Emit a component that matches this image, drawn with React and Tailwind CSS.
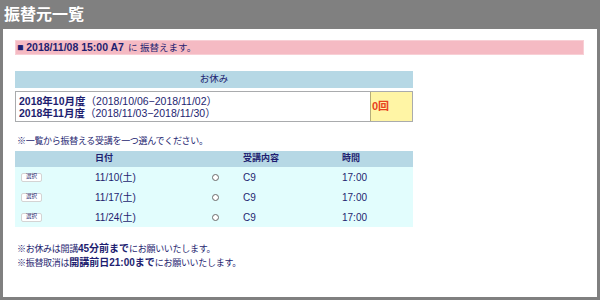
import React from 'react';

const font = { fontFamily: '"Liberation Sans", "Noto Sans CJK JP", sans-serif' };

const rows = [
  { date: '11/10(土)', course: 'C9', time: '17:00' },
  { date: '11/17(土)', course: 'C9', time: '17:00' },
  { date: '11/24(土)', course: 'C9', time: '17:00' },
];

const App = () => {
  return (
    <div className="w-[600px] h-[300px] bg-[#808080] flex flex-col" style={font}>
      {/* header */}
      <div className="h-[29px] flex items-center pl-[4px]">
        <h1 className="text-[16px] font-bold text-white leading-none">振替元一覧</h1>
      </div>

      <div className="flex-1 bg-white mx-[3px] mb-[3px] pl-[12px] pr-[13px] pt-[11px] text-[#1e1e70]">
        {/* target */}
        <div className="h-[15px] bg-[#f5bac3] border border-[#f8cfd5] flex items-center pl-[1px] text-[10.5px] leading-none">
          <span className="font-bold">■ 2018/11/08 15:00 A7</span>
          <span className="ml-[4px] text-[9.5px]">に 振替えます。</span>
        </div>

        {/* absence */}
        <div className="w-[398px] mt-[16px]">
          <div className="h-[17px] bg-[#b6d8e5] flex items-center justify-center text-[9.5px]">お休み</div>
          <div className="mt-[3px] h-[31px] flex border border-[#a9abad]">
            <div className="flex-1 flex flex-col justify-center pl-[3px] text-[10.5px] leading-[12px]">
              <div><span className="font-bold">2018年10月度</span>（2018/10/06−2018/11/02）</div>
              <div><span className="font-bold">2018年11月度</span>（2018/11/03−2018/11/30）</div>
            </div>
            <div className="w-[42px] bg-[#fff5a5] border-l border-[#b5ad7a] flex items-center pl-[1px] text-[11px] font-bold text-[#e8421e]">
              0回
            </div>
          </div>
        </div>

        <p className="mt-[13px] text-[9px] tracking-[-0.3px] leading-[12px] pl-[2px]">※一覧から振替える受講を一つ選んでください。</p>

        {/* list */}
        <div className="w-[398px] mt-[4px] text-[10px]">
          <div className="h-[16px] bg-[#b6d8e5] grid grid-cols-[80px_148px_99px_1fr] items-center font-bold text-[9px]">
            <div />
            <div>日付</div>
            <div>受講内容</div>
            <div>時間</div>
          </div>
          <div className="bg-[#e2fdfd] h-[60px]">
            {rows.map((r) => (
              <div key={r.date} className="h-[20px] grid grid-cols-[80px_117px_31px_99px_1fr] items-center">
                <div className="pl-[6px]">
                  <button className="w-[21px] h-[9px] bg-white border border-[#d4d4d4] rounded-[2px] text-[5.5px] leading-none flex items-center justify-center text-[#1e1e70]">
                    選択
                  </button>
                </div>
                <div>{r.date}</div>
                <div>
                  <div className="w-[7px] h-[7px] rounded-full border border-[#6a6a6a] bg-white" />
                </div>
                <div>{r.course}</div>
                <div>{r.time}</div>
              </div>
            ))}
          </div>
        </div>

        <div className="mt-[15px] text-[9px] tracking-[-0.3px] leading-[14px] pl-[2px]">
          <p>※お休みは開講<span className="font-bold text-[10px] tracking-normal">45分前まで</span>にお願いいたします。</p>
          <p>※振替取消は<span className="font-bold text-[10px] tracking-normal">開講前日21:00まで</span>にお願いいたします。</p>
        </div>
      </div>
    </div>
  );
};

export default App;
